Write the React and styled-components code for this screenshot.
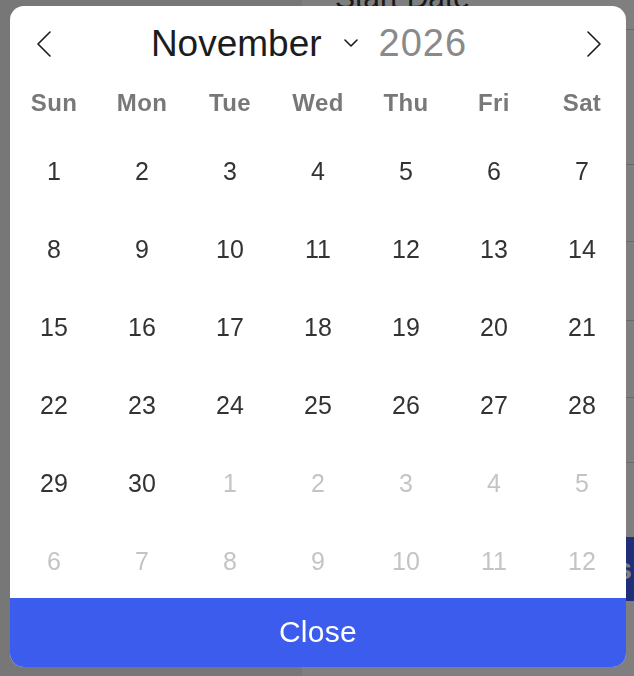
import React, { useState } from 'react';
import styled, { createGlobalStyle } from 'styled-components';

const GlobalStyle = createGlobalStyle`
  html, body {
    margin: 0;
    padding: 0;
    height: 100%;
    overflow: hidden;
    font-family: "Liberation Sans", Arial, sans-serif;
    background: #ffffff;
  }
`;

const Page = styled.div`
  display: flex;
  height: 676px;
`;

const Sidebar = styled.div`
  width: 302px;
  background: #eeeeee;
`;

const Main = styled.div`
  flex: 1;
  display: flex;
  flex-direction: column;
  background: #ffffff;
  margin-top: -20px;
`;

const FieldLabel = styled.div`
  padding-left: 33px;
  font-size: 30px;
  line-height: 36px;
  color: #333333;
  height: 49px;
  border-bottom: 1px solid #d2d2d2;
`;

const FormRow = styled.div`
  height: ${(p) => p.$h}px;
  border-bottom: 1px solid #d2d2d2;
`;

const SaveButton = styled.div`
  margin: 74px 0 0 40px;
  height: 64px;
  background: #3c5cf0;
  color: #ffffff;
  font-size: 30px;
  font-weight: bold;
  display: flex;
  align-items: center;
  justify-content: flex-end;
  padding-right: 2px;
`;

const Overlay = styled.div`
  position: fixed;
  inset: 0;
  background: rgba(0, 0, 0, 0.5);
  display: flex;
  padding: 6px 8px 9px 10px;
`;

const Card = styled.div`
  flex: 1;
  display: flex;
  flex-direction: column;
  background: #ffffff;
  border-radius: 14px;
  overflow: hidden;
`;

const Header = styled.div`
  height: 76px;
  display: flex;
  align-items: center;
  padding: 0 24px 0 26px;
`;

const NavButton = styled.button`
  border: none;
  background: none;
  padding: 0;
  width: 16px;
  height: 28px;
  display: flex;
  align-items: center;
  justify-content: center;
  cursor: pointer;
`;

const Title = styled.div`
  flex: 1;
  display: flex;
  align-items: center;
  justify-content: center;
  padding-right: 20px;
`;

const Month = styled.span`
  font-size: 37px;
  color: #1c1c1c;
`;

const Caret = styled.span`
  display: flex;
  margin: 0 21px 2px 22px;
`;

const Year = styled.span`
  font-size: 38px;
  color: #8a8a8a;
  letter-spacing: 1px;
`;

const Weekdays = styled.div`
  display: grid;
  grid-template-columns: repeat(7, 1fr);
  height: 40px;
  padding-top: 2px;
  margin-bottom: 7px;
  align-items: center;
`;

const Weekday = styled.div`
  text-align: center;
  font-size: 24px;
  font-weight: bold;
  letter-spacing: 0.4px;
  color: #787878;
`;

const Days = styled.div`
  display: grid;
  grid-template-columns: repeat(7, 1fr);
  grid-auto-rows: 78px;
`;

const Day = styled.div`
  display: flex;
  align-items: center;
  justify-content: center;
  padding-top: 4px;
  font-size: 25px;
  color: ${(p) => (p.$muted ? '#c4c4c4' : '#333333')};
`;

const CloseButton = styled.button`
  margin-top: auto;
  height: 69px;
  flex-shrink: 0;
  border: none;
  background: #3b5cec;
  color: #ffffff;
  font-family: inherit;
  font-size: 30px;
  letter-spacing: 0.3px;
  padding: 0 0 2px;
  cursor: pointer;
`;

const Chevron = ({ dir }) => (
  <svg width="16" height="28" viewBox="0 0 16 28" fill="none">
    <path
      d={dir === 'left' ? 'M14 2 L2 14 L14 26' : 'M2 2 L14 14 L2 26'}
      stroke="#1c1c1c"
      strokeWidth="1.6"
      strokeLinecap="round"
      strokeLinejoin="round"
    />
  </svg>
);

const WEEKDAYS = ['Sun', 'Mon', 'Tue', 'Wed', 'Thu', 'Fri', 'Sat'];
const MONTHS = [
  'January', 'February', 'March', 'April', 'May', 'June',
  'July', 'August', 'September', 'October', 'November', 'December',
];

const buildDays = (year, month) => {
  const first = new Date(year, month, 1).getDay();
  const count = new Date(year, month + 1, 0).getDate();
  const prevCount = new Date(year, month, 0).getDate();
  const cells = [];
  for (let i = first - 1; i >= 0; i--) cells.push({ n: prevCount - i, muted: true });
  for (let d = 1; d <= count; d++) cells.push({ n: d, muted: false });
  let next = 1;
  while (cells.length < 42) cells.push({ n: next++, muted: true });
  return cells;
};

const App = () => {
  const [view, setView] = useState({ year: 2026, month: 10 });

  const shift = (delta) => {
    const d = new Date(view.year, view.month + delta, 1);
    setView({ year: d.getFullYear(), month: d.getMonth() });
  };

  const days = buildDays(view.year, view.month);

  return (
    <>
      <GlobalStyle />
      <Page>
        <Sidebar />
        <Main>
          <FieldLabel>Start Date</FieldLabel>
          <FormRow $h={134} />
          <FormRow $h={76} />
          <FormRow $h={78} />
          <FormRow $h={76} />
          <FormRow $h={64} />
          <SaveButton>Save Changes</SaveButton>
        </Main>
      </Page>
      <Overlay>
        <Card>
          <Header>
            <NavButton onClick={() => shift(-1)}>
              <Chevron dir="left" />
            </NavButton>
            <Title>
              <Month>{MONTHS[view.month]}</Month>
              <Caret>
                <svg width="14" height="8" viewBox="0 0 14 8" fill="none">
                  <path d="M1 1 L7 7 L13 1" stroke="#1c1c1c" strokeWidth="1.6" strokeLinecap="round" strokeLinejoin="round" />
                </svg>
              </Caret>
              <Year>{view.year}</Year>
            </Title>
            <NavButton onClick={() => shift(1)}>
              <Chevron dir="right" />
            </NavButton>
          </Header>
          <Weekdays>
            {WEEKDAYS.map((w) => (
              <Weekday key={w}>{w}</Weekday>
            ))}
          </Weekdays>
          <Days>
            {days.map((d, i) => (
              <Day key={i} $muted={d.muted}>{d.n}</Day>
            ))}
          </Days>
          <CloseButton>Close</CloseButton>
        </Card>
      </Overlay>
    </>
  );
};

export default App;
